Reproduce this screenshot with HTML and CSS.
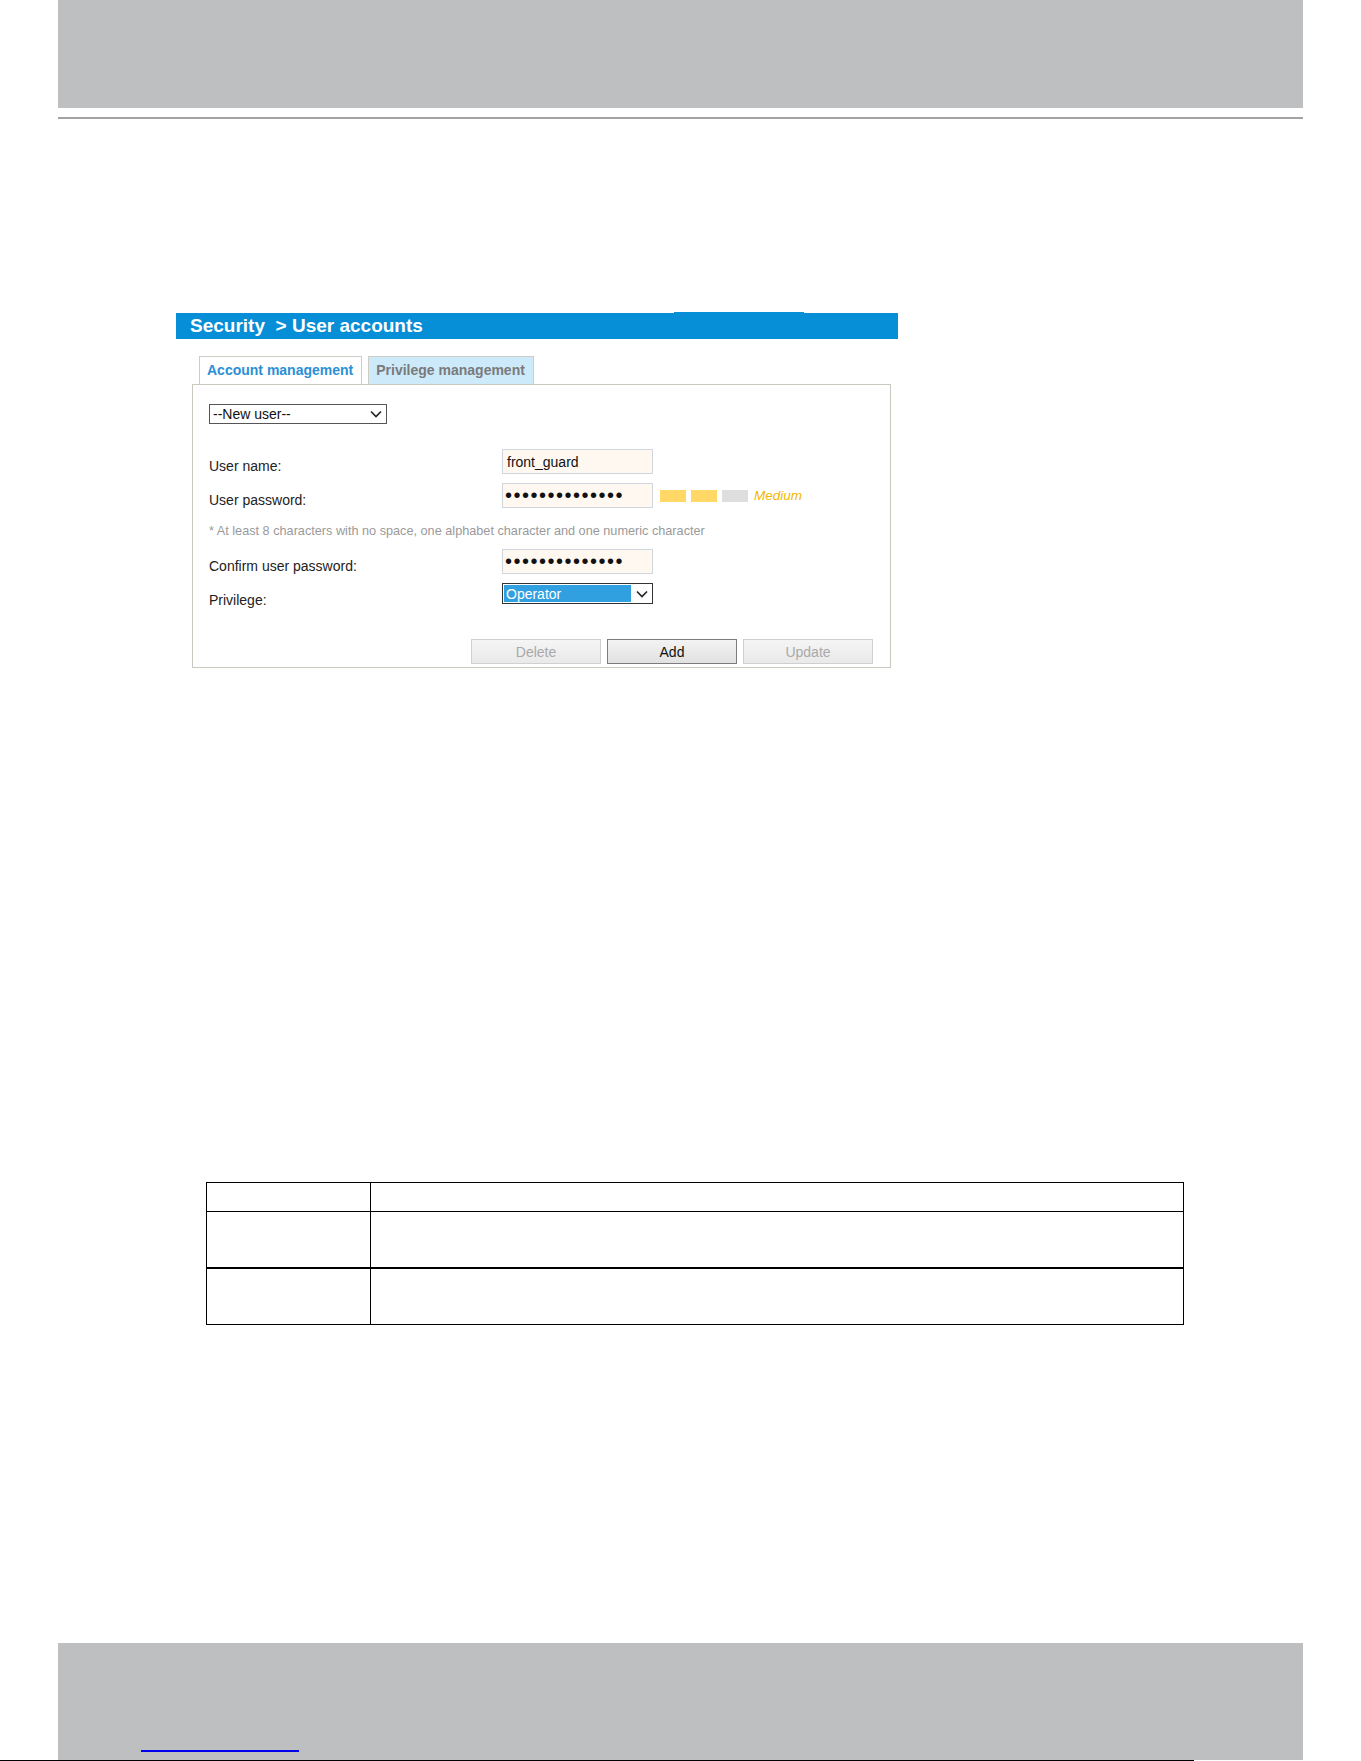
FILE: index.html
```html
<!DOCTYPE html>
<html lang="en">
<head>
  <meta charset="UTF-8" />
  <title>Security - User accounts</title>
  <link rel="stylesheet" href="styles.css">
</head>
<body>

  <!-- page header band -->
  <div class="page-head"></div>
  <div class="head-rule"></div>

  <section class="settings">
    <h1 class="crumb">Security&nbsp; &gt; User accounts</h1>

    <div class="tabs">
      <span class="tab active">Account management</span>
      <span class="tab">Privilege management</span>
    </div>

    <div class="panel">
      <div class="pick user-pick">
        <select>
          <option>--New user--</option>
        </select>
        <svg class="chev" width="12" height="8" viewBox="0 0 12 8"><path d="M1 1.5 L6 6.5 L11 1.5" fill="none" stroke="#222" stroke-width="1.6"/></svg>
      </div>

      <div class="fields">
        <label class="lbl">User name:</label>
        <input class="box" type="text" value="front_guard">

        <label class="lbl">User password:</label>
        <div class="pw-row">
          <input class="box pw" type="password" value="frontguard2024">
          <span class="meter on"></span>
          <span class="meter on"></span>
          <span class="meter"></span>
          <em class="strength">Medium</em>
        </div>

        <p class="hint">* At least 8 characters with no space, one alphabet character and one numeric character</p>

        <label class="lbl">Confirm user password:</label>
        <input class="box pw" type="password" value="frontguard2024">

        <label class="lbl">Privilege:</label>
        <div class="pick priv">
          <select>
            <option>Operator</option>
            <option>Viewer</option>
            <option>Administrator</option>
          </select>
          <svg class="chev" width="12" height="8" viewBox="0 0 12 8"><path d="M1 1.5 L6 6.5 L11 1.5" fill="none" stroke="#222" stroke-width="1.6"/></svg>
        </div>
      </div>

      <div class="actions">
        <button disabled>Delete</button>
        <button>Add</button>
        <button disabled>Update</button>
      </div>
    </div>
  </section>

  <table class="spec">
    <tr><td class="key"></td><td></td></tr>
    <tr class="split"><td class="key"></td><td></td></tr>
    <tr><td class="key"></td><td></td></tr>
  </table>

  <footer class="page-foot">
    <span class="foot-link"></span>
  </footer>
  <div class="foot-rule"></div>

</body>
</html>
```

FILE: styles.css
```css
body {
  margin: 0;
  font-family: "Liberation Sans", Arial, sans-serif;
  background: #fff;
  color: #111;
}

.page-head {
  height: 108px;
  margin: 0 58px;
  background: #bebfc1;
}

.head-rule {
  height: 2px;
  margin: 9px 58px 0;
  background: #a3a3a3;
}

.settings {
  width: 722px;
  margin: 194px 0 0 176px;
}

.crumb {
  position: relative;
  margin: 0;
  height: 26px;
  padding-left: 14px;
  background: #068ed6;
  color: #fff;
  font-size: 19px;
  font-weight: bold;
  line-height: 26px;
}

/* little raised strip on top of the title bar */
.crumb::before {
  content: "";
  position: absolute;
  left: 498px;
  top: -1px;
  width: 130px;
  height: 1px;
  background: #068ed6;
}

.tabs {
  display: flex;
  gap: 6px;
  margin: 17px 0 0 23px;
}

.tab {
  height: 27px;
  padding: 0 8px 0 7px;
  border: 1px solid #cfccc4;
  border-bottom: none;
  background: #cdeafb;
  color: #7a7a7a;
  font-size: 14px;
  font-weight: bold;
  line-height: 27px;
}

.tab.active {
  background: #fff;
  color: #2b8fd6;
}

.panel {
  width: 699px;
  margin-left: 16px;
  padding: 19px 0 3px 16px;
  border: 1px solid #cbc8c0;
  box-sizing: border-box;
}

.pick {
  position: relative;
  display: inline-block;
}

.pick select {
  appearance: none;
  -webkit-appearance: none;
  display: block;
  margin: 0;
  padding: 0 0 0 3px;
  border: 1px solid #555;
  border-radius: 0;
  background: #fff;
  font-family: "Liberation Sans", Arial, sans-serif;
  font-size: 14px;
  color: #111;
}

.pick .chev {
  position: absolute;
  right: 5px;
  top: 50%;
  margin-top: -4px;
  pointer-events: none;
}

.user-pick select {
  width: 178px;
  height: 20px;
  line-height: 18px;
}

.priv select {
  width: 151px;
  height: 21px;
  border-color: #333;
  color: #fff;
  background: linear-gradient(to right, #31a0e0 0, #31a0e0 128px, #fff 128px);
  box-shadow: inset 0 0 0 1px #fff;
}

.fields {
  display: grid;
  grid-template-columns: 293px auto;
  grid-template-rows: 25px 25px 23px 25px 25px;
  row-gap: 9px;
  margin-top: 25px;
}

.lbl {
  align-self: end;
  font-size: 14px;
  line-height: 16px;
  color: #222;
}

.box {
  width: 151px;
  height: 25px;
  margin: 0;
  padding: 0 4px;
  border: 1px solid #d0d6dd;
  background: #fff8f1;
  box-sizing: border-box;
  font-family: "Liberation Sans", Arial, sans-serif;
  font-size: 14px;
  color: #111;
}

.box.pw {
  padding: 0 2px;
  font-size: 20px;
  letter-spacing: 1.5px;
}

.pw-row {
  display: flex;
  align-items: center;
}

.pw-row .box {
  margin-right: 7px;
}

.meter {
  width: 26px;
  height: 12px;
  margin-right: 5px;
  background: #dedede;
}

.meter.on {
  background: #ffd865;
}

.strength {
  margin-left: 1px;
  font-size: 13.5px;
  color: #f2b700;
}

.hint {
  grid-column: 1 / 3;
  margin: 0;
  padding-top: 7px;
  font-size: 12.7px;
  line-height: 14px;
  color: #9a9a9a;
}

.fields .priv {
  align-self: start;
  justify-self: start;
}

.actions {
  display: flex;
  justify-content: flex-end;
  gap: 6px;
  margin-top: 31px;
  padding-right: 17px;
}

.actions button {
  width: 130px;
  height: 25px;
  margin: 0;
  border: 1px solid #7c7c7c;
  border-radius: 0;
  background: linear-gradient(#f3f3f3, #e1e1e1);
  font-family: "Liberation Sans", Arial, sans-serif;
  font-size: 14px;
  color: #111;
}

.actions button:disabled {
  border-color: #d0d0d0;
  background: linear-gradient(#f5f5f5, #e9e9e9);
  color: #a9a9a9;
}

.spec {
  width: 978px;
  margin: 514px 0 0 206px;
  border-collapse: collapse;
}

.spec td {
  height: 28px;
  padding: 0;
  border: 1px solid #000;
}

.spec tr + tr td {
  height: 55px;
}

.spec .key {
  width: 163px;
}

.spec .split td {
  border-bottom: 2px solid #000;
}

.page-foot {
  display: flex;
  align-items: flex-end;
  height: 117px;
  margin: 318px 58px 0;
  padding: 0 0 8px 83px;
  box-sizing: border-box;
  background: #bebfc1;
}

.foot-link {
  width: 158px;
  border-bottom: 2px solid #0000ee;
}

.foot-rule {
  width: 1194px;
  height: 2px;
  background: #000;
}
```
